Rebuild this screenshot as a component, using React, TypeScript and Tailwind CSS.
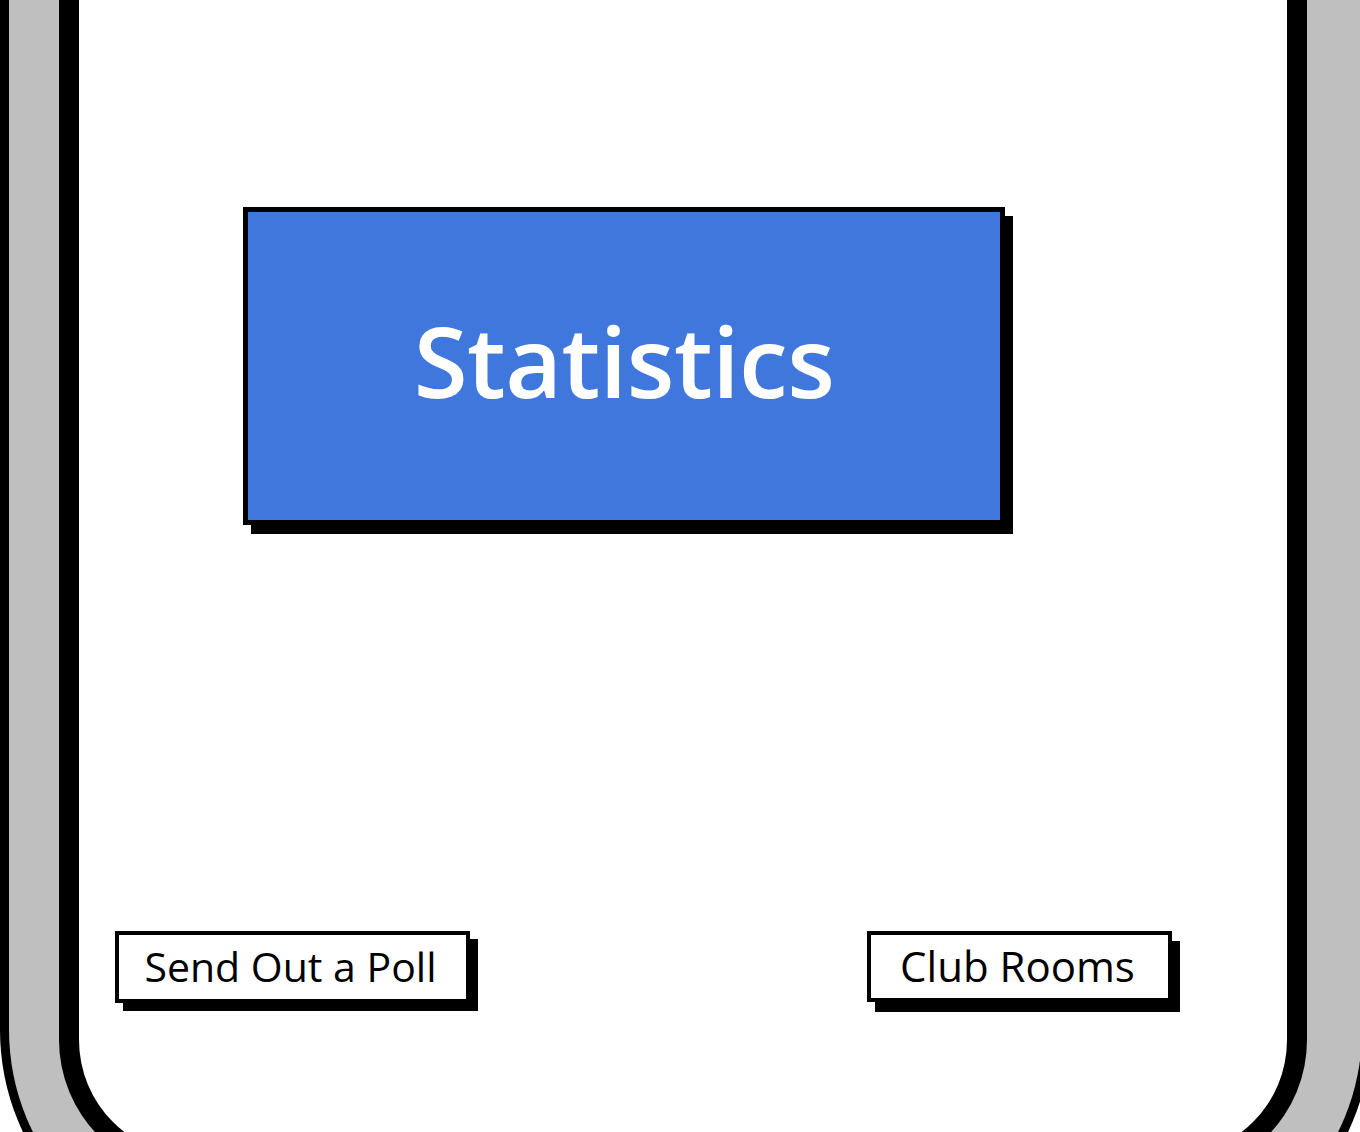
import React from "react";

export default function App() {
  return (
    <div className="relative w-[1360px] h-[1132px] overflow-hidden bg-white" style={{ fontFamily: '"Open Sans", "Noto Sans", sans-serif' }}>
      <div className="w-[1371px] h-[1268px] border-[9px] border-t-0 border-black bg-[#bfbfbf] rounded-b-[238px] pl-[50px] pr-[55px]">
        <div className="h-[1176px] border-[20px] border-t-0 border-black bg-white rounded-b-[136px] flex flex-col">
          <div className="ml-[164px] mt-[207px] w-[762px] h-[318px] border-[5px] border-black bg-[#3f77dd] shadow-[8px_9px_0_#000] flex items-center justify-center">
            <span className="text-white text-[98px] font-semibold leading-none tracking-[-0.5px] -mt-[12px]">Statistics</span>
          </div>
          <div className="mt-[406px] pl-[36px] pr-[115px] flex justify-between items-start">
            <div className="w-[355px] h-[72px] border-[4px] border-black bg-white shadow-[8px_8px_0_#000] flex items-center justify-center">
              <span className="text-black text-[41px] font-medium leading-none -mt-[2px] -ml-[4px]">Send Out a Poll</span>
            </div>
            <div className="w-[305px] h-[71px] border-[4px] border-black bg-white shadow-[8px_10px_0_#000] flex items-center justify-center">
              <span className="text-black text-[42px] font-medium leading-none -mt-[2px] -ml-[4px]">Club Rooms</span>
            </div>
          </div>
        </div>
      </div>
    </div>
  );
}
